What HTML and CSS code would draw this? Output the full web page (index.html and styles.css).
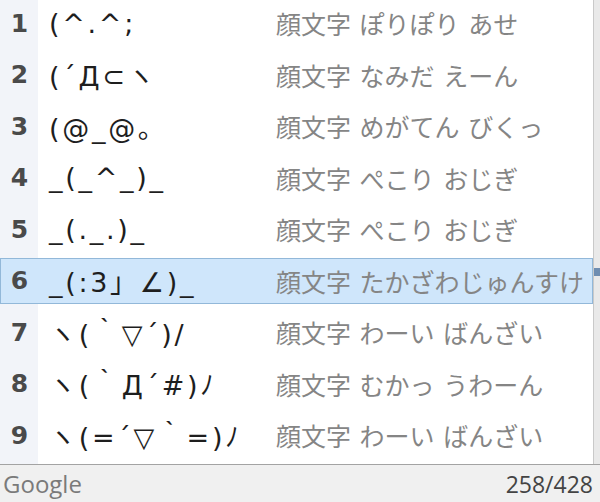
FILE: index.html
```html
<!DOCTYPE html>
<html lang="ja">
<head>
    <meta charset="UTF-8">
    <title>Candidates</title>
    <link rel="stylesheet" href="styles.css">
</head>
<body>
    <div class="window">
        <div class="main">
            <ol class="list">
                <li class="item"><span class="num">1</span><span class="kao">(^.^;</span><span class="desc">顔文字 ぽりぽり あせ</span></li>
                <li class="item"><span class="num">2</span><span class="kao">(´Д⊂ヽ</span><span class="desc">顔文字 なみだ えーん</span></li>
                <li class="item"><span class="num">3</span><span class="kao">(@_@。</span><span class="desc">顔文字 めがてん びくっ</span></li>
                <li class="item"><span class="num">4</span><span class="kao">_(_^_)_</span><span class="desc">顔文字 ぺこり おじぎ</span></li>
                <li class="item"><span class="num">5</span><span class="kao">_(._.)_</span><span class="desc">顔文字 ぺこり おじぎ</span></li>
                <li class="item selected"><span class="num">6</span><span class="kao">_(:3」∠)_</span><span class="desc">顔文字 たかざわじゅんすけ</span></li>
                <li class="item"><span class="num">7</span><span class="kao">ヽ(｀▽´)/</span><span class="desc">顔文字 わーい ばんざい</span></li>
                <li class="item"><span class="num">8</span><span class="kao">ヽ(｀Д´#)ﾉ</span><span class="desc">顔文字 むかっ うわーん</span></li>
                <li class="item"><span class="num">9</span><span class="kao">ヽ(=´▽｀=)ﾉ</span><span class="desc">顔文字 わーい ばんざい</span></li>
            </ol>
            <div class="scroll"><div class="thumb"></div></div>
        </div>
        <div class="footer">
            <span class="brand">Google</span>
            <span class="count">258/428</span>
        </div>
    </div>
</body>
</html>
```

FILE: styles.css
```css
body {
    margin: 0;
    background-color: #fff;
    font-family: "DejaVu Sans", "Noto Sans CJK JP", sans-serif;
}
.window {
    width: 600px;
    height: 502px;
    display: flex;
    flex-direction: column;
    overflow: hidden;
}
.main {
    display: flex;
    height: 464px;
}
.list {
    list-style: none;
    margin: 0;
    padding: 0 0 6px 0;
    width: 593px;
    display: grid;
    grid-template-rows: repeat(9, 46px);
    row-gap: 5.5px;
    background: linear-gradient(to right, #f2f4f9 38px, #fff 38px);
}
.item {
    display: flex;
    align-items: center;
    box-sizing: border-box;
    border: 1px solid transparent;
}
.item.selected {
    background-color: #cfe6fb;
    border-color: #92b8d9;
}
.num {
    width: 37px;
    text-align: center;
    font-weight: bold;
    font-size: 25px;
    color: #4a4a4a;
}
.kao {
    width: 227px;
    padding-left: 11px;
    font-size: 27px;
    letter-spacing: 2.7px;
    color: #1e1e1e;
    white-space: nowrap;
}
.desc {
    font-family: "Noto Sans CJK JP", sans-serif;
    font-size: 25px;
    word-spacing: 3px;
    color: #858585;
    white-space: nowrap;
}
.scroll {
    flex: 1;
    border-left: 1px solid #c9c9c9;
    background-color: #e9e9e9;
    padding-top: 268px;
}
.thumb {
    height: 8px;
    background-color: #6f8db0;
}
.footer {
    flex: 1;
    display: flex;
    align-items: center;
    justify-content: space-between;
    padding: 0 7px 0 3px;
    border-top: 1px solid #a3a3a3;
    background-color: #f0f0f0;
    font-family: "Open Sans", sans-serif;
    font-size: 23px;
}
.brand {
    font-size: 24px;
    color: #7a7a7a;
}
.count {
    color: #444;
}
```
